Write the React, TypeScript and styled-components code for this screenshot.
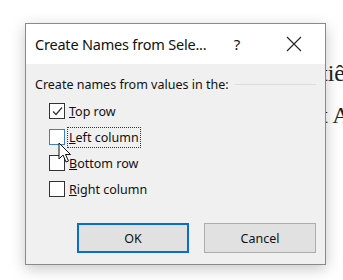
import React from 'react'
import styled, { createGlobalStyle } from 'styled-components'

const GlobalStyle = createGlobalStyle`
  html, body {
    margin: 0;
    padding: 0;
    background: #ffffff;
  }
`

const options = [
  { key: 'T', rest: 'op row', checked: true },
  { key: 'L', rest: 'eft column', checked: false, hover: true, focus: true },
  { key: 'B', rest: 'ottom row', checked: false },
  { key: 'R', rest: 'ight column', checked: false },
]

const App = () => {
  return (
    <Page>
      <GlobalStyle />
      <DocText>
        <p>tiê</p>
        <p>t A</p>
      </DocText>
      <Dialog>
        <TitleBar>
          <Title>Create Names from Sele...</Title>
          <HelpButton>?</HelpButton>
          <CloseButton>
            <svg width="16" height="16" viewBox="0 0 16 16">
              <path d="M1 1 L15 15 M15 1 L1 15" stroke="#222" strokeWidth="1.1" fill="none" />
            </svg>
          </CloseButton>
        </TitleBar>
        <Body>
          <GroupHeading>
            <span>Create names from values in the:</span>
            <Rule />
          </GroupHeading>
          <OptionList>
            {options.map((o) => (
              <Option key={o.key}>
                <Box $hover={o.hover}>
                  {o.checked && (
                    <svg width="13" height="13" viewBox="0 0 13 13">
                      <path d="M2 6.5 L5 9.5 L11 2.5" stroke="#333" strokeWidth="1.2" fill="none" />
                    </svg>
                  )}
                </Box>
                <Label $focus={o.focus}>
                  <u>{o.key}</u>
                  {o.rest}
                </Label>
              </Option>
            ))}
          </OptionList>
          <Buttons>
            <Button $primary>OK</Button>
            <Button>Cancel</Button>
          </Buttons>
        </Body>
      </Dialog>
      <Cursor width="14" height="22" viewBox="0 0 14 22">
        <path
          d="M1 1 L1 17 L5 13 L8 20 L10.5 19 L7.5 12.5 L12.5 12.5 Z"
          fill="#fff"
          stroke="#111"
          strokeWidth="1"
          strokeLinejoin="round"
        />
      </Cursor>
    </Page>
  )
}

const Page = styled.div`
  position: relative;
  width: 343px;
  height: 280px;
  overflow: hidden;
  background: #ffffff;
`

const DocText = styled.div`
  position: absolute;
  left: 321px;
  top: 52px;
  white-space: nowrap;
  font-family: 'Liberation Serif', serif;
  font-size: 24px;
  color: #222;
  p {
    margin: 0;
    line-height: 42px;
  }
`

const Dialog = styled.div`
  position: absolute;
  z-index: 1;
  left: 25px;
  top: 23px;
  width: 299px;
  height: 240px;
  display: flex;
  flex-direction: column;
  border: 1px solid #8a8a8a;
  background: #f0f0f0;
  box-shadow: 0 4px 14px rgba(0, 0, 0, 0.22);
  font-family: 'Noto Sans', 'Open Sans', sans-serif;
  color: #111;
`

const TitleBar = styled.div`
  height: 40px;
  display: flex;
  align-items: center;
  background: #ffffff;
  padding-left: 9px;
`

const Title = styled.div`
  flex: 1;
  font-size: 14.5px;
  letter-spacing: -0.2px;
  color: #111;
`

const HelpButton = styled.div`
  width: 24px;
  text-align: center;
  font-size: 15px;
  margin-right: 37px;
`

const CloseButton = styled.div`
  width: 16px;
  height: 16px;
  margin-right: 23px;
  display: flex;
`

const Body = styled.div`
  flex: 1;
  display: flex;
  flex-direction: column;
  padding: 10px 9px 0 9px;
`

const GroupHeading = styled.div`
  display: flex;
  align-items: center;
  gap: 6px;
  font-size: 12.5px;
  height: 20px;
`

const Rule = styled.div`
  flex: 1;
  height: 1px;
  background: #dcdcdc;
`

const OptionList = styled.div`
  display: flex;
  flex-direction: column;
  padding: 4px 0 0 14px;
`

const Option = styled.div`
  height: 26px;
  display: flex;
  align-items: center;
  gap: 2px;
`

const Box = styled.div<{ $hover?: boolean }>`
  width: 14px;
  height: 14px;
  border: 1px solid ${(p) => (p.$hover ? '#3c7fcf' : '#333')};
  background: #fff;
  display: flex;
  align-items: center;
  justify-content: center;
`

const Label = styled.span<{ $focus?: boolean }>`
  font-size: 12.5px;
  padding: 1px 1px;
  border: 1px dotted ${(p) => (p.$focus ? '#333' : 'transparent')};
`

const Buttons = styled.div`
  margin-top: auto;
  margin-bottom: 11px;
  display: flex;
  justify-content: flex-end;
  gap: 15px;
`

const Button = styled.div<{ $primary?: boolean }>`
  width: 112px;
  height: 30px;
  box-sizing: border-box;
  display: flex;
  align-items: center;
  justify-content: center;
  font-size: 12.5px;
  background: #e1e1e1;
  border: ${(p) => (p.$primary ? '2px solid #0a6cd0' : '1px solid #adadad')};
`

const Cursor = styled.svg`
  position: absolute;
  z-index: 2;
  left: 58px;
  top: 142px;
`

export default App
